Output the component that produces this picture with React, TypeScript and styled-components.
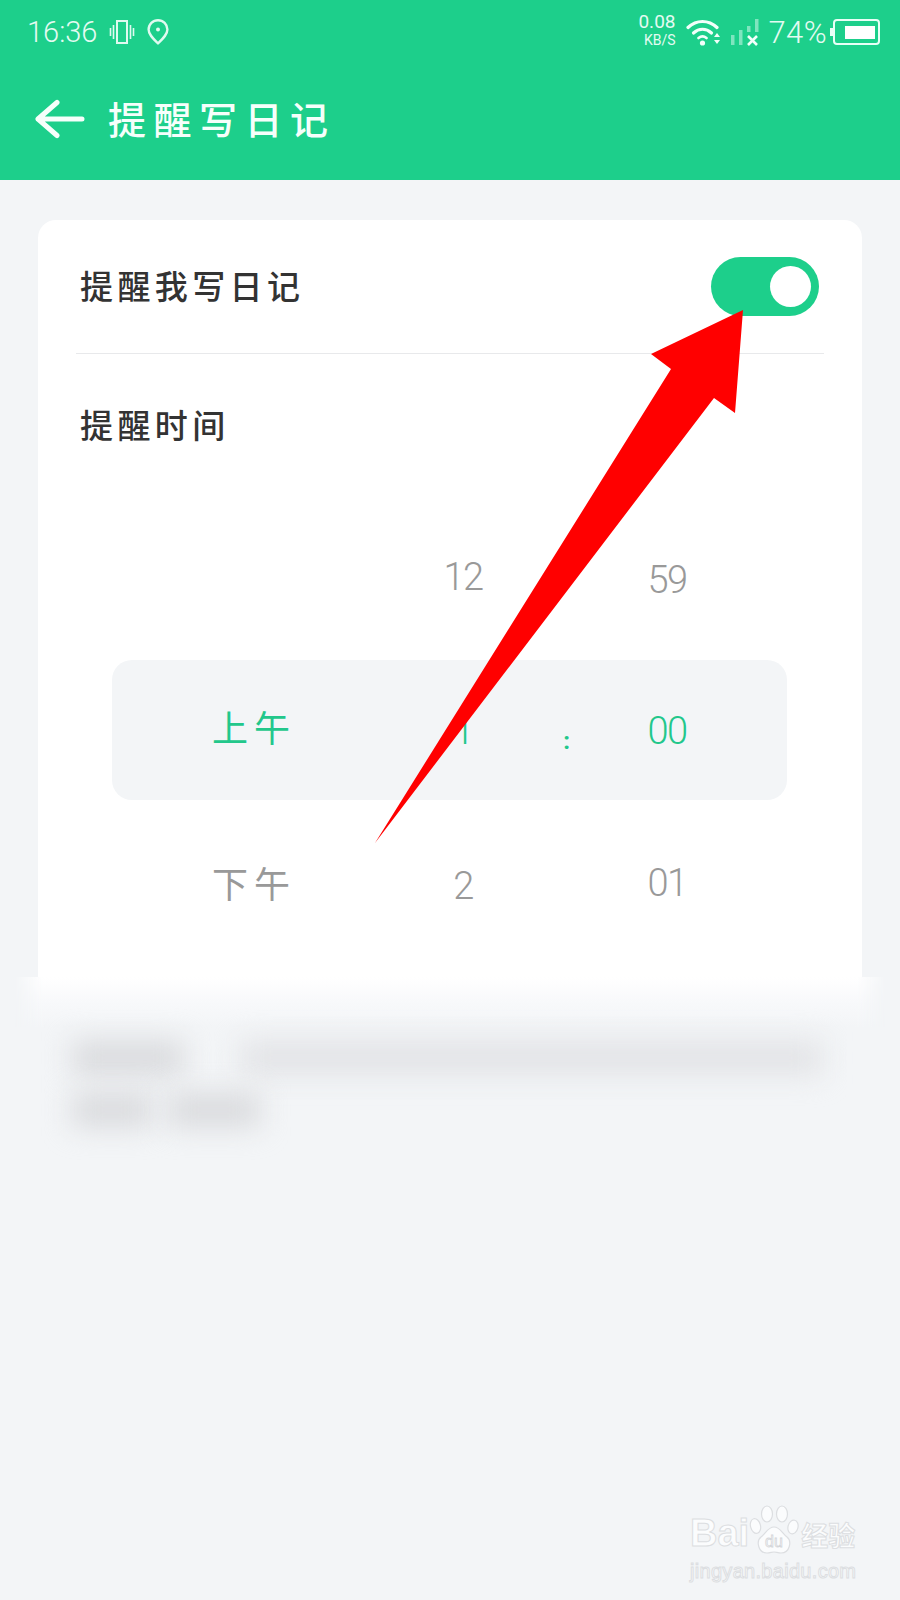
import React from "react";
import styled, { createGlobalStyle } from "styled-components";

const GREEN = "#1dcf8b";
const PAGE_BG = "#f3f5f7";

const GlobalStyle = createGlobalStyle`
  html, body {
    margin: 0;
    padding: 0;
    background: ${PAGE_BG};
  }
  * {
    box-sizing: border-box;
  }
`;

const VibrateIcon = () => (
  <svg width="26" height="26" viewBox="0 0 26 26" fill="none" stroke="#dffaf0" strokeWidth="2">
    <rect x="8" y="2" width="10" height="22" />
    <path d="M1.5 9v8M4.5 6v14M21.5 6v14M24.5 9v8" strokeWidth="1.6" />
  </svg>
);

const PinIcon = () => (
  <svg width="22" height="26" viewBox="0 0 22 26" fill="none" stroke="#dffaf0" strokeWidth="2.4">
    <path d="M11 24.5C6 19.5 1.6 15.5 1.6 10.6a9.4 9.4 0 0 1 18.8 0c0 4.9-4.4 8.9-9.4 13.9z" strokeLinejoin="round" />
    <circle cx="11" cy="10.5" r="2" fill="#dffaf0" stroke="none" />
  </svg>
);

const WifiIcon = () => (
  <svg width="36" height="28" viewBox="0 0 36 28" fill="none" stroke="#f2fffa" strokeWidth="3.2" strokeLinecap="round">
    <path d="M2 9.5C10.5 1.5 22.5 1.5 31 9.5" />
    <path d="M7.5 15c5.5-5 12.5-5 18 0" />
    <path d="M12.5 20c3-2.4 5-2.4 8 0" strokeWidth="2.8" />
    <circle cx="16.5" cy="25" r="2.6" fill="#f2fffa" stroke="none" />
    <path d="M31 15l3 4h-6zM31 26l3-4h-6z" fill="#f2fffa" stroke="none" />
  </svg>
);

const SignalIcon = () => (
  <svg width="30" height="28" viewBox="0 0 30 28" fill="#7fe5bf">
    <rect x="1" y="17" width="3.5" height="10" />
    <rect x="9" y="12" width="3.5" height="15" />
    <rect x="17" y="8" width="3.5" height="6" />
    <rect x="25" y="1" width="3.5" height="13" />
    <path d="M18 18l9 9M27 18l-9 9" stroke="#f2fffa" strokeWidth="2.6" fill="none" />
  </svg>
);

const BatteryIcon = () => (
  <svg width="50" height="26" viewBox="0 0 50 26" fill="none">
    <rect x="0" y="9" width="3" height="8" fill="#e8fff6" />
    <rect x="4" y="1" width="45" height="24" rx="3" stroke="#e8fff6" strokeWidth="2" />
    <rect x="15" y="7" width="30" height="13" fill="#ffffff" />
  </svg>
);

const BackIcon = () => (
  <svg width="50" height="40" viewBox="0 0 50 40" fill="none" stroke="#f6fffb" strokeWidth="5" strokeLinecap="round" strokeLinejoin="round">
    <path d="M3 20h44M22 3.5L3 20 22 36.5" />
  </svg>
);

const PawIcon = () => (
  <svg width="50" height="50" viewBox="0 0 50 50" fill="#fbfcfd" stroke="#dcdee1" strokeWidth="1.2">
    <ellipse cx="6.5" cy="21" rx="5" ry="7.5" transform="rotate(-14 6.5 21)" />
    <ellipse cx="18" cy="9" rx="5.5" ry="8" />
    <ellipse cx="33" cy="9" rx="5.5" ry="8" />
    <ellipse cx="44" cy="22" rx="5" ry="7" transform="rotate(14 44 22)" />
    <path d="M25 22c6 0 8 6 13 10 5 4 3 16-6 16-3 0-5-1-7-1s-4 1-7 1c-9 0-11-12-6-16 5-4 7-10 13-10z" />
    <text x="25" y="42" textAnchor="middle" fontFamily="Liberation Sans, sans-serif" fontSize="16" fill="#fbfcfd" stroke="#d4d6d9" strokeWidth="0.8">
      du
    </text>
  </svg>
);

const Arrow = () => (
  <ArrowLayer width="900" height="1600" viewBox="0 0 900 1600">
    <polygon points="743,310 651,354 671,369 375,843 714,398 735,413" fill="#ff0000" />
  </ArrowLayer>
);

const App: React.FC = () => {
  return (
    <Page>
      <GlobalStyle />
      <Header>
        <StatusBar>
          <StatusGroup $gap={12}>
            <Clock>16:36</Clock>
            <VibrateIcon />
            <PinIcon />
          </StatusGroup>
          <StatusGroup $gap={8}>
            <Speed>
              <SpeedValue>0.08</SpeedValue>
              <SpeedUnit>KB/S</SpeedUnit>
            </Speed>
            <WifiIcon />
            <SignalIcon />
            <BatteryGroup>
              <BatteryText>74%</BatteryText>
              <BatteryIcon />
            </BatteryGroup>
          </StatusGroup>
        </StatusBar>
        <NavBar>
          <BackIcon />
          <Title>提醒写日记</Title>
        </NavBar>
      </Header>

      <Card>
        <SwitchRow>
          <RowLabel>提醒我写日记</RowLabel>
          <Toggle>
            <Knob />
          </Toggle>
        </SwitchRow>
        <TimeSection>
          <RowLabel>提醒时间</RowLabel>
          <Wheel>
            <WheelBand />
            <WheelItem $col={1} $row={3} $wide $shift={-4}>下午</WheelItem>
            <WheelItem $col={1} $row={2} $wide $active $shift={-6}>上午</WheelItem>
            <WheelItem $col={2} $row={1} $shift={6}>12</WheelItem>
            <WheelItem $col={2} $row={2} $active $shift={4}>1</WheelItem>
            <WheelItem $col={2} $row={3} $shift={4}>2</WheelItem>
            <Colon $col={3} $row={2} $active $shift={24}>:</Colon>
            <WheelItem $col={4} $row={1} $shift={12}>59</WheelItem>
            <WheelItem $col={4} $row={2} $active $shift={4}>00</WheelItem>
            <WheelItem $col={4} $row={3} $shift={-2}>01</WheelItem>
          </Wheel>
        </TimeSection>
      </Card>

      <CardFade />

      <Redacted>
        <RedactedLine>
          <RedactedBar $width={112} $gapAfter={56} $dark />
          <RedactedBar $width={582} />
        </RedactedLine>
        <RedactedLine>
          <RedactedBar $width={80} $gapAfter={16} $dark />
          <RedactedBar $width={92} $dark />
        </RedactedLine>
      </Redacted>

      <Arrow />

      <Watermark>
        <WatermarkBrand>
          <BrandLatin>Bai</BrandLatin>
          <PawIcon />
          <BrandCjk>经验</BrandCjk>
        </WatermarkBrand>
        <WatermarkUrl>jingyan.baidu.com</WatermarkUrl>
      </Watermark>
    </Page>
  );
};

export default App;

const Page = styled.div`
  position: relative;
  width: 900px;
  height: 1600px;
  overflow: hidden;
  background: ${PAGE_BG};
  font-family: "Noto Sans CJK SC", Roboto, sans-serif;
`;

const Header = styled.header`
  height: 180px;
  background: ${GREEN};
`;

const StatusBar = styled.div`
  display: flex;
  justify-content: space-between;
  align-items: center;
  height: 64px;
  padding: 0 20px 0 27px;
`;

const StatusGroup = styled.div<{ $gap: number }>`
  display: flex;
  align-items: center;
  gap: ${(p) => p.$gap}px;
`;

const Clock = styled.span`
  font-family: Roboto, sans-serif;
  font-size: 29px;
  font-weight: 300;
  line-height: 1;
  color: #e4fbf2;
`;

const BatteryText = styled(Clock)`
  font-size: 31px;
  letter-spacing: 0.4px;
`;

const Speed = styled.div`
  display: flex;
  flex-direction: column;
  align-items: flex-end;
  margin-right: 3px;
  padding-bottom: 4px;
  font-family: Roboto, sans-serif;
  color: #e4fbf2;
`;

const SpeedValue = styled.span`
  font-size: 19px;
  line-height: 21px;
`;

const SpeedUnit = styled.span`
  font-size: 14px;
  line-height: 17px;
`;

const BatteryGroup = styled.div`
  display: flex;
  align-items: center;
  gap: 3px;
`;

const NavBar = styled.div`
  display: flex;
  align-items: center;
  gap: 23px;
  height: 110px;
  padding-left: 35px;
`;

const Title = styled.h1`
  margin: 0 0 4px;
  font-size: 38px;
  font-weight: 500;
  letter-spacing: 7.5px;
  color: #f6fffb;
`;

const Card = styled.section`
  margin: 40px 38px 0;
  height: 757px;
  padding: 0 38px;
  background: #ffffff;
  border-radius: 18px 18px 0 0;
`;

const SwitchRow = styled.div`
  display: flex;
  justify-content: space-between;
  align-items: center;
  height: 134px;
  padding: 0 5px 0 4px;
  border-bottom: 1px solid #e8e9eb;
`;

const RowLabel = styled.div`
  margin-bottom: 4px;
  font-size: 33px;
  font-weight: 500;
  line-height: 48px;
  letter-spacing: 4.4px;
  color: #333333;
`;

const Toggle = styled.div`
  display: flex;
  justify-content: flex-end;
  align-items: center;
  width: 108px;
  height: 59px;
  padding-right: 8px;
  border-radius: 30px;
  background: ${GREEN};
`;

const Knob = styled.div`
  width: 41px;
  height: 41px;
  border-radius: 50%;
  background: #ffffff;
`;

const TimeSection = styled.div`
  padding: 46px 0 0 4px;
`;

const Wheel = styled.div`
  display: grid;
  grid-template-columns: 276px 150px 56px 146px 47px;
  grid-template-rows: repeat(3, 155px);
  width: 675px;
  margin: 49px 0 0 32px;
`;

const WheelBand = styled.div`
  grid-column: 1 / 6;
  grid-row: 2;
  align-self: center;
  height: 140px;
  border-radius: 20px;
  background: ${PAGE_BG};
`;

const WheelItem = styled.div<{
  $col: number;
  $row: number;
  $active?: boolean;
  $wide?: boolean;
  $shift?: number;
}>`
  grid-column: ${(p) => p.$col};
  grid-row: ${(p) => p.$row};
  align-self: center;
  justify-self: center;
  margin-top: ${(p) => p.$shift ?? 0}px;
  padding-left: ${(p) => (p.$wide ? 8 : 0)}px;
  font-family: ${(p) => (p.$wide ? '"Noto Sans CJK SC"' : "Roboto")}, sans-serif;
  font-size: ${(p) => (p.$wide ? 36 : 38)}px;
  font-weight: ${(p) => (p.$wide ? 400 : 300)};
  letter-spacing: ${(p) => (p.$wide ? "6px" : "-1.5px")};
  line-height: 1.2;
  color: ${(p) => (p.$active ? "#22c78b" : "#999999")};
`;

const Colon = styled(WheelItem)`
  font-size: 24px;
  font-weight: 700;
`;

const CardFade = styled.div`
  height: 50px;
  margin: 0 14px;
  background: linear-gradient(#ffffff, #f8f9fb 50%, ${PAGE_BG});
  mask-image: linear-gradient(to right, transparent, #000 30px, #000 calc(100% - 30px), transparent);
`;

const Redacted = styled.div`
  display: flex;
  flex-direction: column;
  gap: 18px;
  padding: 14px 0 0 72px;
`;

const RedactedLine = styled.div`
  display: flex;
`;

const RedactedBar = styled.div<{ $width: number; $gapAfter?: number; $dark?: boolean }>`
  width: ${(p) => p.$width}px;
  height: 34px;
  margin-right: ${(p) => p.$gapAfter ?? 0}px;
  background: ${(p) => (p.$dark ? "#d9dadd" : "#e2e3e6")};
  filter: blur(14px);
`;

const ArrowLayer = styled.svg`
  position: absolute;
  top: 0;
  left: 0;
  pointer-events: none;
`;

const Watermark = styled.div`
  position: absolute;
  top: 1503px;
  left: 690px;
  width: 175px;
`;

const WatermarkBrand = styled.div`
  display: flex;
  align-items: flex-end;
  height: 52px;
`;

const outlineText = `
  color: #fbfcfd;
  -webkit-text-stroke: 1px #dcdee1;
`;

const BrandLatin = styled.span`
  ${outlineText}
  font-family: "Liberation Sans", sans-serif;
  font-size: 38px;
  font-weight: 700;
  line-height: 44px;
`;

const BrandCjk = styled.span`
  ${outlineText}
  margin-left: 2px;
  font-size: 27px;
  font-weight: 700;
  line-height: 40px;
  white-space: nowrap;
`;

const WatermarkUrl = styled.div`
  ${outlineText}
  margin-top: 4px;
  font-family: "Liberation Sans", sans-serif;
  font-size: 20px;
  line-height: 24px;
  letter-spacing: 0.3px;
`;
